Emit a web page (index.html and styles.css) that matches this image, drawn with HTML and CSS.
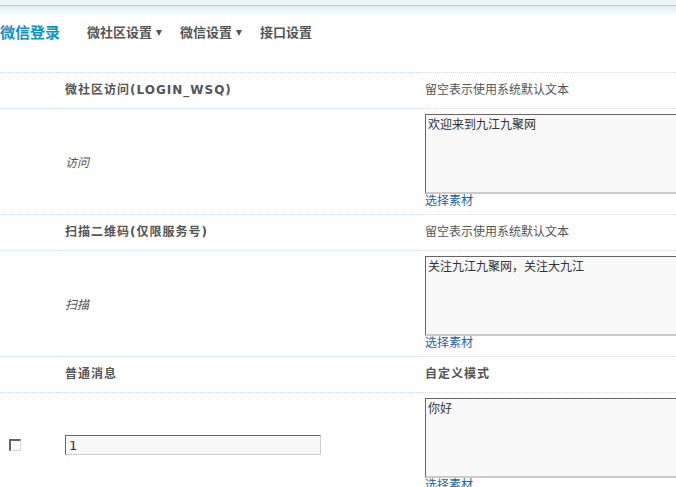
FILE: index.html
```html
<!DOCTYPE html>
<html>
<head>
<meta charset="utf-8">
<link rel="stylesheet" href="styles.css">
</head>
<body>
<div class="page">
  <div class="topbar"></div>
  <div class="nav">
    <span class="brand">微信登录</span>
    <span class="nav-item">微社区设置<i class="caret"></i></span>
    <span class="nav-item">微信设置<i class="caret"></i></span>
    <span class="nav-item">接口设置</span>
  </div>
  <table class="grid">
    <colgroup><col class="c1"><col class="c2"><col class="c3"></colgroup>
    <tr class="head">
      <td></td>
      <td class="title">微社区访问(LOGIN_WSQ)</td>
      <td class="hint">留空表示使用系统默认文本</td>
    </tr>
    <tr class="body">
      <td></td>
      <td class="desc">访问</td>
      <td class="editor">
        <textarea class="box">欢迎来到九江九聚网</textarea>
        <a class="pick">选择素材</a>
      </td>
    </tr>
    <tr class="head">
      <td></td>
      <td class="title">扫描二维码(仅限服务号)</td>
      <td class="hint">留空表示使用系统默认文本</td>
    </tr>
    <tr class="body">
      <td></td>
      <td class="desc">扫描</td>
      <td class="editor">
        <textarea class="box">关注九江九聚网，关注大九江</textarea>
        <a class="pick">选择素材</a>
      </td>
    </tr>
    <tr class="head">
      <td></td>
      <td class="title">普通消息</td>
      <td class="title">自定义模式</td>
    </tr>
    <tr class="body">
      <td class="check"><input type="checkbox" class="cb"></td>
      <td><input type="text" class="field" value="1"></td>
      <td class="editor">
        <textarea class="box">你好</textarea>
        <a class="pick">选择素材</a>
      </td>
    </tr>
  </table>
</div>
</body>
</html>
```
FILE: styles.css
```css
html, body {
  margin: 0;
  padding: 0;
  background: #fff;
  overflow: hidden;
}
body {
  font-family: "DejaVu Sans", "Noto Sans CJK SC", sans-serif;
  font-size: 12px;
  color: #555;
}
.page {
  width: 676px;
  overflow: hidden;
}
.topbar {
  height: 5px;
  background: #eef5fa;
  border-bottom: 1px solid #b7cfe0;
}
.nav {
  height: 54px;
  margin-bottom: 12px;
  display: flex;
  align-items: center;
  background: linear-gradient(#e2eef7, #ffffff 11px);
}
.brand {
  font-size: 15px;
  font-weight: bold;
  color: #0c93c8;
  margin-right: 27px;
  line-height: 20px;
}
.nav-item {
  font-size: 13px;
  font-weight: bold;
  color: #555;
  margin-right: 18px;
  display: flex;
  align-items: center;
  line-height: 20px;
}
.caret {
  display: inline-block;
  width: 0;
  height: 0;
  border-left: 3px solid transparent;
  border-right: 3px solid transparent;
  border-top: 6px solid #555;
  margin-left: 4px;
}
.grid {
  width: 676px;
  table-layout: fixed;
  border-collapse: separate;
  border-spacing: 0;
}
.c1 { width: 59px; }
.c2 { width: 360px; }
.grid td {
  border-top: 1px dotted #c4e2f4;
  padding: 0 6px;
  vertical-align: middle;
  white-space: nowrap;
  overflow: visible;
}
.head td {
  padding-top: 10px;
  padding-bottom: 10px;
  line-height: 15px;
}
.title {
  font-weight: bold;
  color: #555;
  letter-spacing: 1px;
}
.hint {
  color: #555;
}
.body td {
  padding-top: 5px;
  padding-bottom: 6px;
}
.desc {
  font-style: italic;
  color: #555;
}
.box {
  display: block;
  box-sizing: border-box;
  width: 300px;
  height: 80px;
  margin: 0;
  padding: 2px 2px;
  resize: none;
  font-family: "DejaVu Sans", "Noto Sans CJK SC", sans-serif;
  font-size: 12px;
  line-height: 16px;
  color: #333;
  background: #f8f8f8;
  border-top: 1px solid #666;
  border-left: 1px solid #666;
  border-right: 1px solid #ccc;
  border-bottom: 2px solid #ccc;
}
.pick {
  display: block;
  line-height: 14px;
  color: #2263a6;
  cursor: pointer;
}
.check {
  padding-left: 6px;
}
.cb {
  -webkit-appearance: none;
  appearance: none;
  display: block;
  width: 12px;
  height: 12px;
  margin: 0 0 0 3px;
  box-sizing: border-box;
  background: #fff;
  border-top: 2px solid #666;
  border-left: 2px solid #666;
  border-right: 1px solid #d8d4cc;
  border-bottom: 1px solid #d8d4cc;
}
.field {
  display: block;
  box-sizing: border-box;
  width: 256px;
  height: 20px;
  margin: 0;
  padding: 0 3px;
  font-family: "DejaVu Sans", sans-serif;
  font-size: 13px;
  color: #333;
  background: #f8f8f8;
  border-top: 1px solid #666;
  border-left: 1px solid #666;
  border-right: 1px solid #ccc;
  border-bottom: 1px solid #ccc;
}
```
